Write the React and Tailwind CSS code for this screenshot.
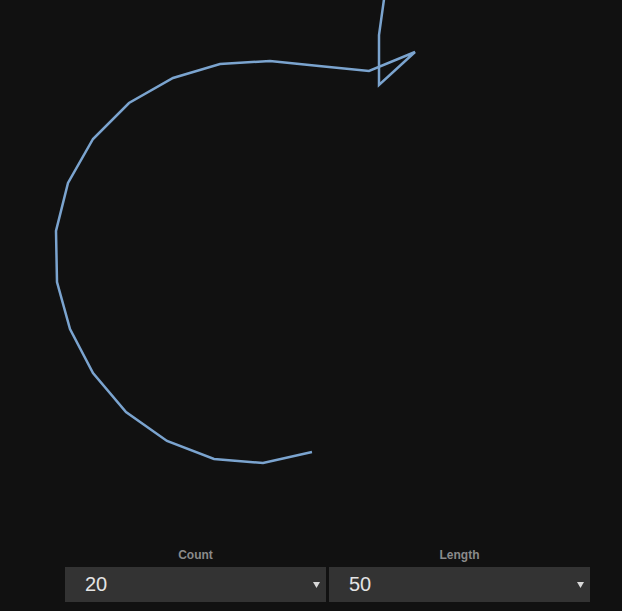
const pts = [
  [312, 452], [263, 463], [214, 459], [167, 441], [126, 412], [93, 373], [70, 329],
  [57, 282], [56, 231], [68, 183], [93, 139], [129, 103], [173, 78], [220, 64],
  [270, 61], [319, 66], [369, 71], [415, 52], [379, 85], [379, 35], [386, -15],
];

const Field = ({ label, value }) => (
  <div className="flex flex-col w-[261px]">
    <div className="text-center text-[12px] leading-[14px] font-bold text-[#8a8a8a] mb-[5px]">{label}</div>
    <div className="h-[35px] bg-[#333333] flex items-center pl-[20px] pr-[6px]">
      <span className="flex-1 text-[20px] leading-none text-[#e4e4e4] -mt-[1px]">{value}</span>
      <svg width="7" height="7" viewBox="0 0 7 7">
        <polygon points="0,1 7,1 3.5,7" fill="#d8d8d8" />
      </svg>
    </div>
  </div>
);

export default function App() {
  return (
    <div className="w-[622px] h-[611px] bg-[#111111] overflow-hidden" style={{ fontFamily: '"Liberation Sans", Arial, sans-serif' }}>
      <svg width="622" height="548" className="block">
        <polyline
          points={pts.map((p) => p.join(',')).join(' ')}
          fill="none"
          stroke="#7ba4cf"
          strokeWidth="2.5"
          strokeLinejoin="miter"
        />
      </svg>
      <div className="flex gap-[3px] ml-[65px]">
        <Field label="Count" value="20" />
        <Field label="Length" value="50" />
      </div>
    </div>
  );
}
